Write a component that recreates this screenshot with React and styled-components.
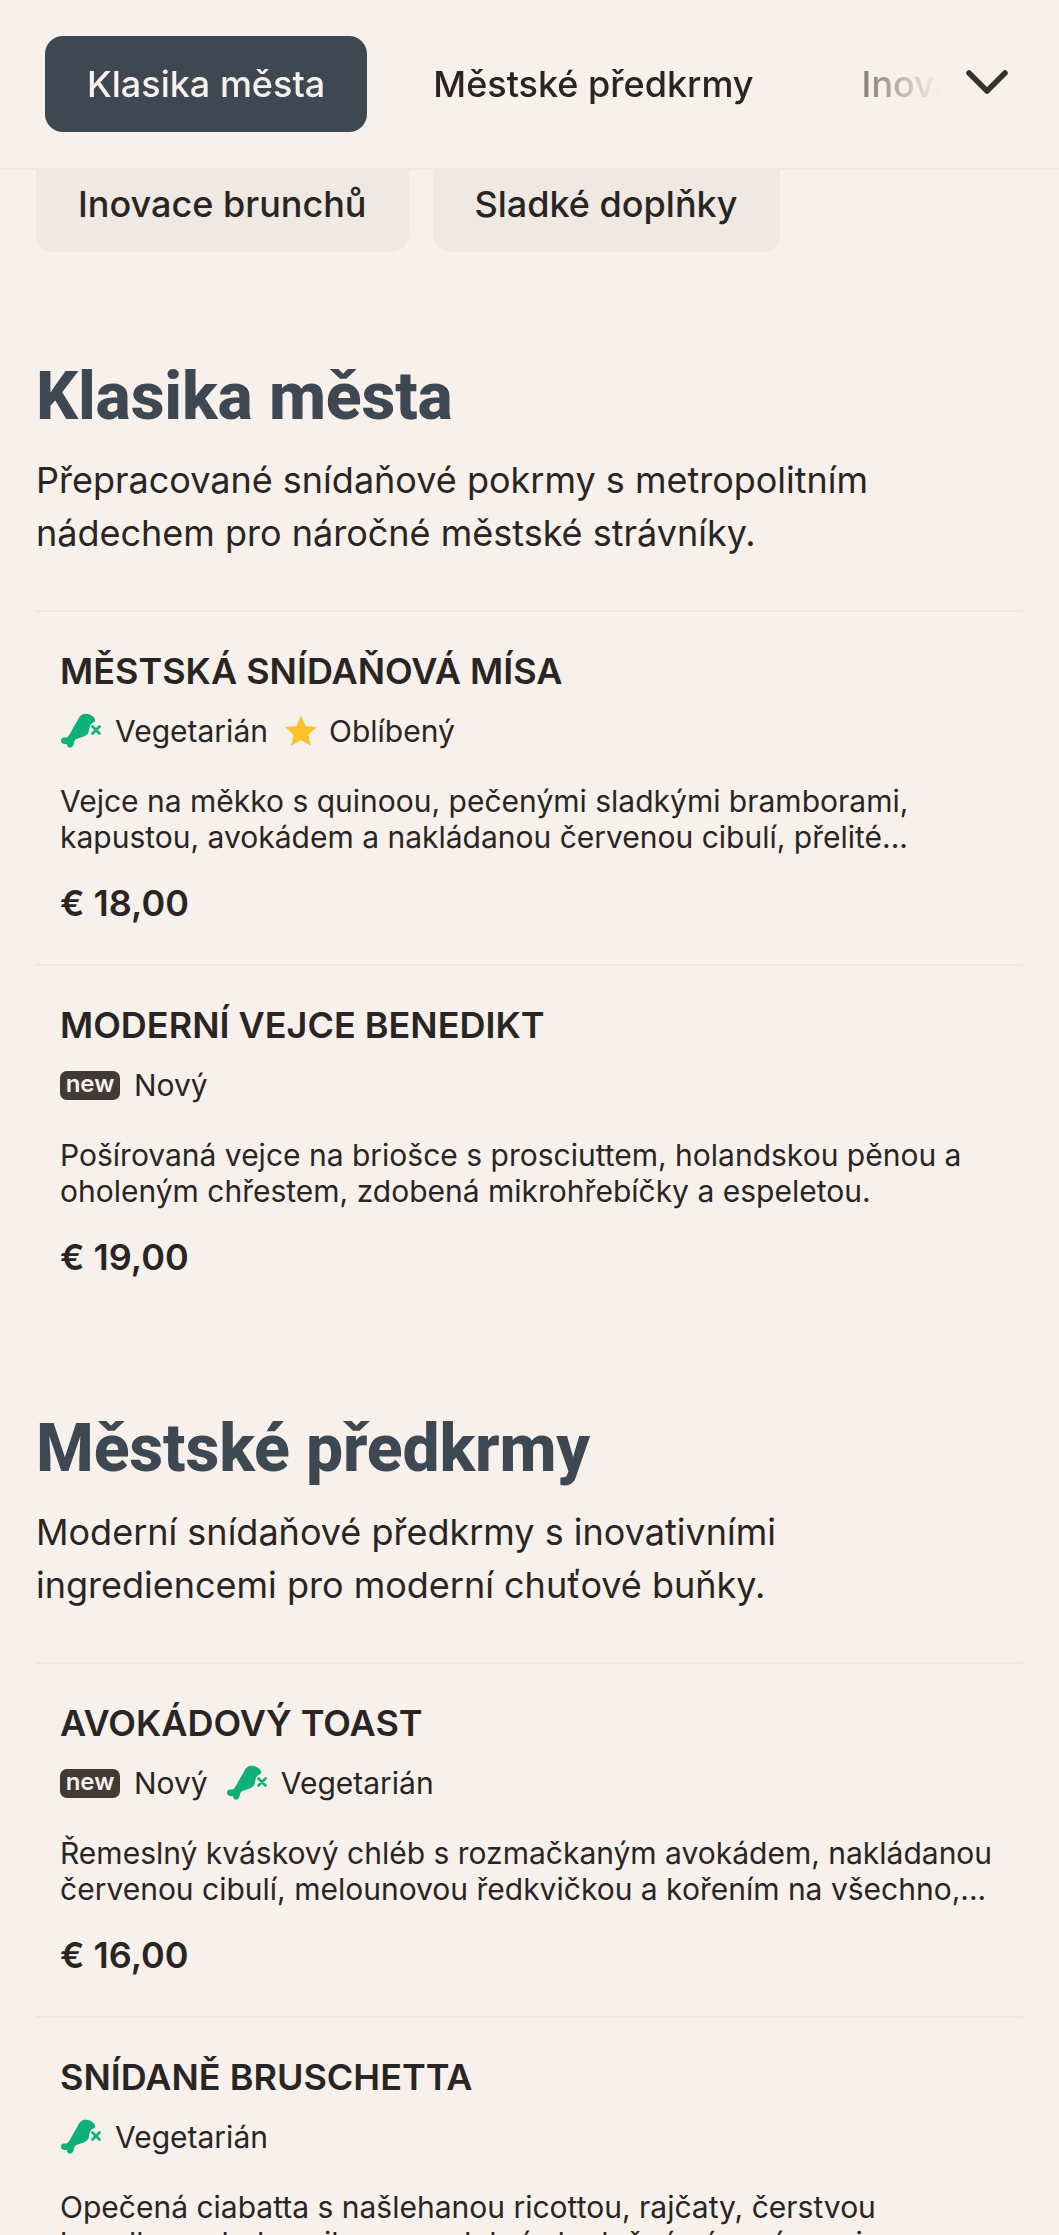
import styled, { createGlobalStyle } from "styled-components";

const GlobalStyle = createGlobalStyle`
  html, body {
    margin: 0;
    padding: 0;
    background: #f7f0eb;
    color: #292524;
    font-family: "Inter", "Liberation Sans", sans-serif;
  }
  * { box-sizing: border-box; }
`;

const Page = styled.div`
  width: 1059px;
  height: 2235px;
  overflow: hidden;
  background: #f7f0eb;
`;

const TopBar = styled.header`
  display: flex;
  align-items: center;
  height: 170px;
  padding: 0 48px 0 45px;
  border-bottom: 2px solid #efe9e4;
`;

const TabScroller = styled.nav`
  flex: 1;
  display: flex;
  align-items: center;
  gap: 24px;
  overflow: hidden;
  white-space: nowrap;
  mask-image: linear-gradient(to right, #000 85%, transparent 100%);
`;

const Tab = styled.button`
  flex: none;
  height: 96px;
  padding: 0 42px;
  border: 0;
  outline: 0;
  border-radius: 18px;
  font: 500 36px "Inter", sans-serif;
  background: ${(p) => (p.$active ? "#3d4852" : "transparent")};
  color: ${(p) => (p.$active ? "#f7f0eb" : "#292524")};
`;

const Chevron = styled.svg`
  flex: none;
  width: 48px;
  height: 48px;
  margin-left: 24px;
`;

const ChipRow = styled.div`
  display: flex;
  gap: 24px;
  padding: 0 36px;
`;

const Chip = styled.div`
  height: 82px;
  padding: 0 42px 14px;
  display: flex;
  align-items: center;
  border-radius: 0 0 18px 18px;
  background: #efe8e3;
  font-size: 36px;
  font-weight: 500;
`;

const Section = styled.section`
  padding: 0 36px;
  margin-top: ${(p) => p.$top}px;
`;

const SectionTitle = styled.h2`
  margin: 0;
  font-family: "Roboto", "Inter", sans-serif;
  font-size: 66px;
  line-height: 78px;
  font-weight: 800;
  letter-spacing: -0.15px;
  color: #3d4852;
`;

const SectionText = styled.p`
  margin: 18px 0 0;
  width: 900px;
  font-size: 36px;
  line-height: 53px;
`;

const Item = styled.article`
  margin-top: ${(p) => p.$top ?? 0}px;
  padding: 37px 24px 39px;
  border-top: 2px solid #efe9e4;
`;

const ItemName = styled.h3`
  margin: 0;
  font-size: 36px;
  line-height: 44px;
  font-weight: 600;
  text-transform: uppercase;
`;

const Tags = styled.div`
  display: flex;
  align-items: center;
  gap: 18px;
  margin-top: 16px;
  height: 44px;
`;

const Tag = styled.span`
  display: flex;
  align-items: center;
  gap: ${(p) => p.$gap ?? 14}px;
  font-size: 30px;
`;

const StarTag = styled(Tag)`
  margin-left: -1px;
`;

const NewBadge = styled.span`
  display: inline-flex;
  align-items: center;
  justify-content: center;
  width: 60px;
  height: 29px;
  border-radius: 7px;
  background: #413a36;
  color: #f7f0eb;
  font-size: 24px;
  font-weight: 600;
  line-height: 1;
  padding-bottom: 3px;
`;

const Description = styled.p`
  margin: 30px 0 0;
  font-size: 30px;
  line-height: 36px;
`;

const Price = styled.div`
  margin-top: 26px;
  font-size: 36px;
  line-height: 44px;
  font-weight: 600;
`;

function VegetarianIcon() {
  return (
    <svg width="41" height="36" viewBox="0 0 41 36">
      <path
        fill="#10b07a"
        d="M17 8.500C18.500 4.500 21 1.500 24 .8C27.500 .2 31 1.500 33 3.500C34.800 5 35.500 7 35 8.500C32.500 9.500 30 11.500 29.500 14.500C29 16.500 29 18.500 28 20.500C26 23 23 24 20 24.700C18 25.200 16 26 14.700 27.500C13.700 29 14.200 32 12 34C10 35.500 7 34.500 6.800 31C4.800 31.500 1.500 30.700 1 28.500C.6 26 2.200 24.500 4 24.500C5.500 24.400 6.500 24.800 7.500 24C9 22.500 10.500 20 11.500 18C13 15 15 11.500 17 8.500Z"
      />
      <path stroke="#10b07a" strokeWidth="2.6" strokeLinecap="round" d="M32.500 13.500l7 7m0-7l-7 7" />
    </svg>
  );
}

function StarIcon() {
  return (
    <svg width="32" height="32" viewBox="0 0 30 30">
      <path fill="#fcc02a" d="M15 0.5l4.3 9.7 10.5 1.1-7.9 7.1 2.3 10.4-9.2-5.4-9.2 5.4 2.3-10.4-7.900-7.100 10.500-1.100z" />
    </svg>
  );
}

function VegetarianTag() {
  return (
    <Tag>
      <VegetarianIcon />
      Vegetarián
    </Tag>
  );
}

function FavoriteTag() {
  return (
    <StarTag $gap={12}>
      <StarIcon />
      Oblíbený
    </StarTag>
  );
}

function NewTag() {
  return (
    <Tag>
      <NewBadge>new</NewBadge>
      Nový
    </Tag>
  );
}

const sections = [
  {
    title: "Klasika města",
    top: 106,
    text: "Přepracované snídaňové pokrmy s metropolitním nádechem pro náročné městské strávníky.",
    items: [
      {
        name: "Městská snídaňová mísa",
        tags: [VegetarianTag, FavoriteTag],
        text: "Vejce na měkko s quinoou, pečenými sladkými bramborami, kapustou, avokádem a nakládanou červenou cibulí, přelité...",
        price: "€ 18,00",
      },
      {
        name: "Moderní vejce Benedikt",
        tags: [NewTag],
        text: "Pošírovaná vejce na briošce s prosciuttem, holandskou pěnou a oholeným chřestem, zdobená mikrohřebíčky a espeletou.",
        price: "€ 19,00",
      },
    ],
  },
  {
    title: "Městské předkrmy",
    top: 92,
    text: "Moderní snídaňové předkrmy s inovativními ingrediencemi pro moderní chuťové buňky.",
    items: [
      {
        name: "Avokádový toast",
        tags: [NewTag, VegetarianTag],
        text: "Řemeslný kváskový chléb s rozmačkaným avokádem, nakládanou červenou cibulí, melounovou ředkvičkou a kořením na všechno,...",
        price: "€ 16,00",
      },
      {
        name: "Snídaně bruschetta",
        tags: [VegetarianTag],
        text: "Opečená ciabatta s našlehanou ricottou, rajčaty, čerstvou bazalkou a balzamikovou redukcí, doplněná sázeným vejcem a sůl...",
        price: "€ 15,00",
      },
    ],
  },
];

export default function App() {
  return (
    <Page>
      <GlobalStyle />
      <TopBar>
        <TabScroller>
          <Tab $active>Klasika města</Tab>
          <Tab>Městské předkrmy</Tab>
          <Tab>Inovace brunchů</Tab>
        </TabScroller>
        <Chevron viewBox="0 0 48 48" fill="none" stroke="#38322e" strokeWidth="5.5" strokeLinecap="round" strokeLinejoin="round">
          <path d="M6 13l18 18 18-18" />
        </Chevron>
      </TopBar>
      <ChipRow>
        <Chip>Inovace brunchů</Chip>
        <Chip>Sladké doplňky</Chip>
      </ChipRow>
      {sections.map((section) => (
        <Section key={section.title} $top={section.top}>
          <SectionTitle>{section.title}</SectionTitle>
          <SectionText>{section.text}</SectionText>
          {section.items.map((item, i) => (
            <Item key={item.name} $top={i === 0 ? 50 : 0}>
              <ItemName>{item.name}</ItemName>
              <Tags>
                {item.tags.map((TagItem, j) => (
                  <TagItem key={j} />
                ))}
              </Tags>
              <Description>{item.text}</Description>
              <Price>{item.price}</Price>
            </Item>
          ))}
        </Section>
      ))}
    </Page>
  );
}
